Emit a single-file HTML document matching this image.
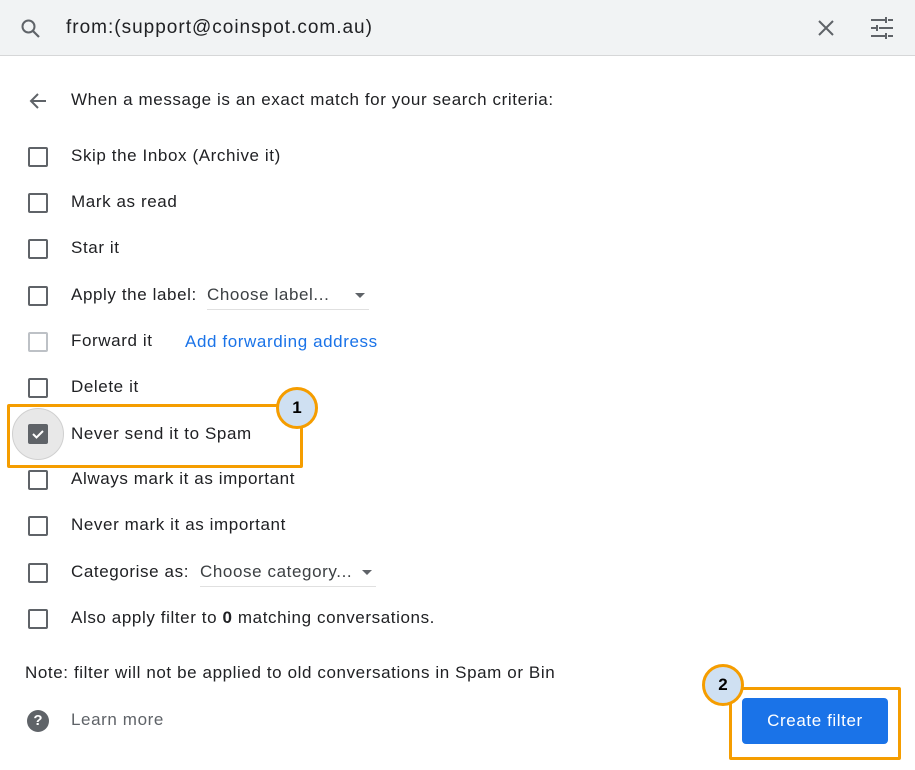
<!DOCTYPE html><html><head><style>
body{margin:0;width:915px;height:770px;background:#fff;font-family:"Liberation Sans",Arial,sans-serif;color:#202124;position:relative;overflow:hidden}
.hdr{position:absolute;left:0;top:0;width:915px;height:55px;background:#f1f3f4;border-bottom:1px solid #d6d7d8}
.a{position:absolute}
.t{position:absolute;font-size:17px;line-height:20px;white-space:nowrap;letter-spacing:.6px}
.cb{position:absolute;left:28px;width:16px;height:16px;border:2px solid #5f6368;border-radius:2px}
.dd{position:absolute;font-size:17px;color:#3c4043;border-bottom:1px solid #e0e0e0;padding-bottom:4px;letter-spacing:.6px}
.dd:after{content:"";position:absolute;right:4px;top:8px;border:5px solid transparent;border-top-color:#5f6368;border-bottom:0}
.circ{position:absolute;width:36px;height:36px;border:3px solid #f59d00;border-radius:50%;background:#cfe0f2;font:bold 17px "Liberation Sans",sans-serif;text-align:center;line-height:36px;color:#000}
</style></head><body>
<div class="hdr"></div>
<svg class="a" style="left:19px;top:17px" width="24" height="24" viewBox="0 0 24 24"><circle cx="9.5" cy="9.5" r="6" fill="none" stroke="#5f6368" stroke-width="2"/><path d="M14 14l6 6" stroke="#5f6368" stroke-width="2.2"/></svg>
<div class="t" style="left:66px;top:16px;font-size:19px;line-height:24px;letter-spacing:1px">from:(support@coinspot.com.au)</div>
<svg class="a" style="left:815px;top:17px" width="22" height="22" viewBox="0 0 22 22"><path d="M4 4l14 14M18 4L4 18" stroke="#5f6368" stroke-width="2"/></svg>
<svg class="a" style="left:869px;top:16px" width="26" height="24" viewBox="0 0 26 24"><g stroke="#5f6368" stroke-width="2"><path d="M2 4h14M19 4h5M17 1v6M2 12h5M10 12h14M8 9v6M2 20h14M19 20h5M17 17v6"/></g></svg>
<svg class="a" style="left:27px;top:90px" width="22" height="22" viewBox="0 0 22 22"><path d="M19 11H4M11 4l-7 7 7 7" fill="none" stroke="#5f6368" stroke-width="2"/></svg>
<div class="t" style="left:71px;top:90px">When a message is an exact match for your search criteria:</div>

<div class="cb" style="top:147px"></div><div class="t" style="left:71px;top:146px">Skip the Inbox (Archive it)</div>
<div class="cb" style="top:193px"></div><div class="t" style="left:71px;top:192px">Mark as read</div>
<div class="cb" style="top:239px"></div><div class="t" style="left:71px;top:238px">Star it</div>
<div class="cb" style="top:286px"></div><div class="t" style="left:71px;top:285px">Apply the label:</div>
<div class="dd" style="left:207px;top:285px;width:162px">Choose label...</div>
<div class="cb" style="top:332px;border-color:#bdc1c6"></div><div class="t" style="left:71px;top:331px">Forward it</div>
<div class="t" style="left:185px;top:332px;color:#1a73e8">Add forwarding address</div>
<div class="cb" style="top:378px"></div><div class="t" style="left:71px;top:377px">Delete it</div>
<div class="a" style="left:12px;top:408px;width:50px;height:50px;border-radius:50%;background:#e8e8e8;border:1px solid #d0d0d0"></div>
<div class="a" style="left:28px;top:424px;width:20px;height:20px;background:#5f6368;border-radius:2px"></div>
<svg class="a" style="left:28px;top:424px" width="20" height="20"><path d="M5 10l3.5 3.5L15 7" fill="none" stroke="#fff" stroke-width="2"/></svg>
<div class="t" style="left:71px;top:424px">Never send it to Spam</div>
<div class="cb" style="top:470px"></div><div class="t" style="left:71px;top:469px">Always mark it as important</div>
<div class="cb" style="top:516px"></div><div class="t" style="left:71px;top:515px">Never mark it as important</div>
<div class="cb" style="top:563px"></div><div class="t" style="left:71px;top:562px">Categorise as:</div>
<div class="dd" style="left:200px;top:562px;width:176px">Choose category...</div>
<div class="cb" style="top:609px"></div><div class="t" style="left:71px;top:608px">Also apply filter to <b>0</b> matching conversations.</div>
<div class="t" style="left:25px;top:663px">Note: filter will not be applied to old conversations in Spam or Bin</div>
<div class="a" style="left:27px;top:710px;width:22px;height:22px;border-radius:50%;background:#5f6368;color:#fff;font:bold 15px 'Liberation Sans',sans-serif;text-align:center;line-height:22px">?</div>
<div class="t" style="left:71px;top:710px;color:#5f6368">Learn more</div>
<div class="a" style="left:742px;top:698px;width:146px;height:46px;background:#1a73e8;border-radius:4px;color:#fff;font-size:17px;line-height:46px;text-align:center;letter-spacing:.6px">Create filter</div>

<div class="a" style="left:7px;top:404px;width:290px;height:58px;border:3px solid #f59d00;border-radius:2px"></div>
<div class="circ" style="left:276px;top:387px">1</div>
<div class="a" style="left:729px;top:687px;width:166px;height:67px;border:3px solid #f59d00;border-radius:2px"></div>
<div class="circ" style="left:702px;top:664px">2</div>
</body></html>
